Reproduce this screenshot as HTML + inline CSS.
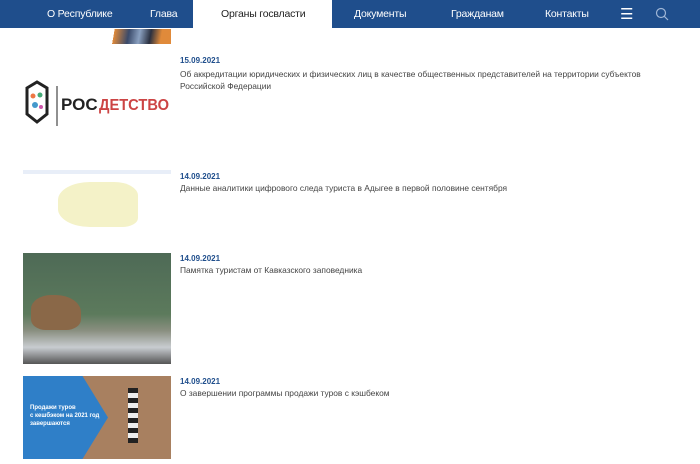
<!DOCTYPE html>
<html><head><meta charset="utf-8"><style>
body{margin:0;width:700px;height:464px;overflow:hidden;background:#fff;font-family:"Liberation Sans",sans-serif;position:relative}
.nav{position:absolute;top:0;left:0;width:700px;height:28px;background:#1f4e8c}
.nav span{position:absolute;top:8px;color:#fff;font-size:10.5px;white-space:nowrap;letter-spacing:-0.2px}
.act{position:absolute;left:193px;top:0;width:139px;height:29px;background:#fff}
.d{position:absolute;left:180px;font-size:8px;font-weight:bold;color:#1f4e8c}
.t{position:absolute;left:180px;font-size:8.4px;color:#444;line-height:12px;width:480px}
.im{position:absolute;left:23px;width:148px}
</style></head><body>
<div class="nav"></div><div class="act"></div>
<div class="nav" style="background:none">
<span style="left:47px">О Республике</span>
<span style="left:150px">Глава</span>
<span style="left:221px;color:#222">Органы госвласти</span>
<span style="left:354px">Документы</span>
<span style="left:451px">Гражданам</span>
<span style="left:545px">Контакты</span>
<span style="left:620px;top:5px;font-size:15px">☰</span>
</div>
<svg style="position:absolute;left:655px;top:7px" width="14" height="14"><circle cx="6" cy="6" r="4.5" fill="none" stroke="#9fb6d6" stroke-width="1.2"/><line x1="9.3" y1="9.3" x2="13" y2="13" stroke="#9fb6d6" stroke-width="1.2"/></svg>
<div style="position:absolute;left:100px;top:29px;width:71px;height:15px;background:linear-gradient(100deg,#fff 0 20%,#e08a3a 20%,#3a4a6a 40%,#8aa0c0 55%,#2a3040 70%,#e08a3a 85%)"></div>

<div class="im" style="top:60px;height:70px">
<svg width="148" height="70"><path d="M4 28 L14 22 L24 28 L24 54 L14 62 L4 54Z" fill="#fff" stroke="#222" stroke-width="3"/><circle cx="10" cy="36" r="2.5" fill="#e74"/><circle cx="17" cy="35" r="2.5" fill="#4a7"/><circle cx="12" cy="45" r="3" fill="#49c"/><circle cx="18" cy="47" r="2" fill="#c5a"/><line x1="34" y1="26" x2="34" y2="66" stroke="#222"/>
<text x="38" y="50" font-family="Liberation Sans" font-weight="bold" font-size="17" fill="#222">РОС</text>
<text x="76" y="50" font-family="Liberation Sans" font-weight="bold" font-size="16" fill="#c44" textLength="70" lengthAdjust="spacingAndGlyphs">ДЕТСТВО</text></svg></div>
<div class="d" style="top:56px">15.09.2021</div>
<div class="t" style="top:68px">Об аккредитации юридических и физических лиц в качестве общественных представителей на территории субъектов Российской Федерации</div>

<div class="im" style="top:170px;height:70px;background:#fff"><div style="height:4px;background:#e8eef8"></div>
<div style="position:absolute;left:35px;top:12px;width:80px;height:45px;background:#f4f2c8;border-radius:40% 30% 20% 40%"></div></div>
<div class="d" style="top:172px">14.09.2021</div>
<div class="t" style="top:182px">Данные аналитики цифрового следа туриста в Адыгее в первой половине сентября</div>

<div class="im" style="top:253px;height:111px;background:linear-gradient(180deg,#4e6a56 0,#5c7a5c 55%,#8a8f80 70%,#c8ccd0 85%,#555 100%)">
<div style="position:absolute;left:8px;top:42px;width:50px;height:35px;background:#8a6848;border-radius:40% 50% 30% 30%"></div></div>
<div class="d" style="top:254px">14.09.2021</div>
<div class="t" style="top:264px">Памятка туристам от Кавказского заповедника</div>

<div class="im" style="top:376px;height:83px;background:#a88060">
<div style="position:absolute;left:0;top:0;width:85px;height:83px;background:#2f7fc8;clip-path:polygon(0 0,70% 0,100% 50%,70% 100%,0 100%)"></div>
<div style="position:absolute;left:7px;top:28px;color:#fff;font-size:6px;font-weight:bold;line-height:8px">Продажи туров<br>с кешбэком на 2021 год<br>завершаются</div>
<div style="position:absolute;left:105px;top:12px;width:10px;height:55px;background:repeating-linear-gradient(180deg,#222 0 5px,#eee 5px 10px)"></div></div>
<div class="d" style="top:377px">14.09.2021</div>
<div class="t" style="top:387px">О завершении программы продажи туров с кэшбеком</div>
</body></html>
